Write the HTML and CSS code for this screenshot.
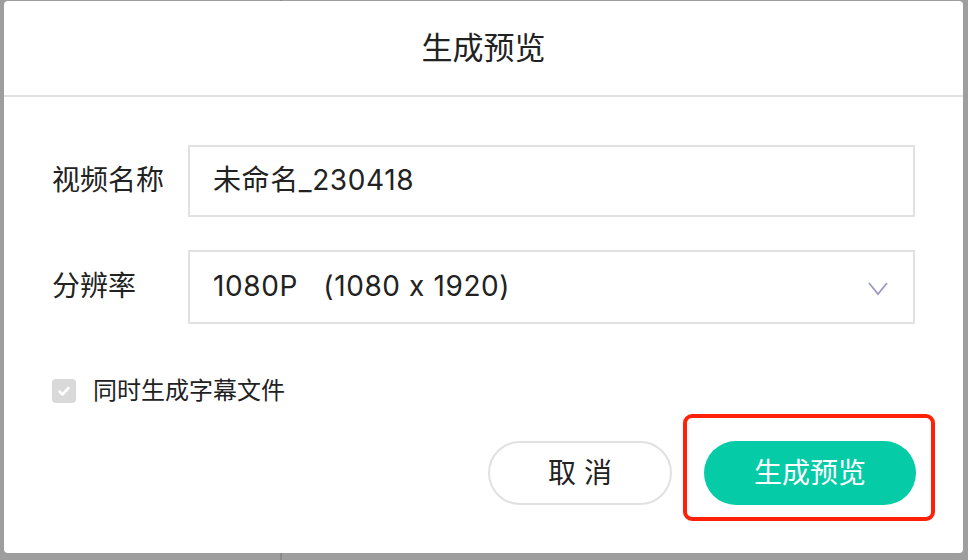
FILE: index.html
```html
<!DOCTYPE html>
<html lang="zh-CN">
<head>
<meta charset="utf-8">
<title>生成预览</title>
<link rel="stylesheet" href="styles.css">
</head>
<body>
<div class="dialog">
  <div class="header">生成预览</div>
  <div class="content">
    <div class="row">
      <div class="label">视频名称</div>
      <div class="field">未命名_230418</div>
    </div>
    <div class="row row-gap">
      <div class="label">分辨率</div>
      <div class="field field-tall select">
        <span>1080P&nbsp;&nbsp;&nbsp;(1080 x 1920)</span>
        <svg class="chevron" width="22" height="16" viewBox="0 0 22 16"><path d="M2 2 L11 13 L20 2" fill="none" stroke="#9a9bc0" stroke-width="1.8"/></svg>
      </div>
    </div>
    <div class="check-row">
      <span class="checkbox"><svg width="24" height="24" viewBox="0 0 24 24"><path d="M7.5 12.5 L10.5 15.5 L16.5 9" fill="none" stroke="#fff" stroke-width="2.6" stroke-linecap="round" stroke-linejoin="round"/></svg></span>
      <span class="check-label">同时生成字幕文件</span>
    </div>
    <div class="footer">
      <button class="btn btn-cancel">取 消</button>
      <button class="btn btn-primary">生成预览</button>
    </div>
  </div>
  <div class="highlight"></div>
</div>
</body>
</html>
```
FILE: styles.css
```css
html, body {
  margin: 0;
  padding: 0;
}
body {
  width: 968px;
  height: 560px;
  overflow: hidden;
  background: linear-gradient(to right, #9e9e9e 0, #9e9e9e 280px, #8a8a8a 280px, #8a8a8a 282px, #9e9e9e 282px);
  font-family: "Inter", "Noto Sans CJK SC", "Noto Sans", sans-serif;
  font-feature-settings: "calt" 0;
  color: #222;
  line-height: 1.2;
}
.dialog {
  position: relative;
  margin: 1px 0 0 4px;
  width: 959px;
  height: 552px;
  background: #fff;
  border-radius: 4px;
  display: flex;
  flex-direction: column;
}
.header {
  flex: 0 0 auto;
  height: 94px;
  border-bottom: 2px solid #e2e2e2;
  display: flex;
  align-items: center;
  justify-content: center;
  font-size: 31px;
  color: #222;
}
.content {
  flex: 0 0 auto;
  padding: 48px 48px 0 48px;
  display: flex;
  flex-direction: column;
}
.row {
  flex: 0 0 auto;
  display: flex;
  align-items: center;
}
.row-gap {
  margin-top: 33px;
}
.label {
  width: 136px;
  font-size: 28px;
  color: #222;
}
.field {
  flex: 1;
  height: 72px;
  box-sizing: border-box;
  border: 2px solid #e1e1e1;
  padding: 0 24px 0 23px;
  display: flex;
  align-items: center;
  font-size: 28px;
  letter-spacing: 0.6px;
  color: #222;
}
.field-tall {
  height: 74px;
}
.select {
  justify-content: space-between;
}
.chevron {
  display: block;
  margin-top: 4px;
}
.check-row {
  flex: 0 0 auto;
  margin-top: 55px;
  height: 24px;
  display: flex;
  align-items: center;
}
.checkbox {
  width: 24px;
  height: 24px;
  border-radius: 4px;
  background: #d9d9d9;
  display: flex;
}
.check-label {
  margin-left: 17px;
  font-size: 24px;
  color: #222;
}
.footer {
  flex: 0 0 auto;
  margin-top: 38px;
  margin-right: -1px;
  display: flex;
  justify-content: flex-end;
  gap: 32px;
}
.btn {
  height: 64px;
  border-radius: 32px;
  font-family: inherit;
  font-size: 28px;
  line-height: 1;
  padding: 0;
  cursor: pointer;
}
.btn-cancel {
  width: 184px;
  background: #fff;
  border: 2px solid #e1e1e1;
  color: #222;
}
.btn-primary {
  width: 212px;
  background: #05cca6;
  border: none;
  color: #fff;
}
.highlight {
  position: absolute;
  left: 679px;
  top: 413px;
  width: 252px;
  height: 107px;
  box-sizing: border-box;
  border: 4px solid #ff2208;
  border-radius: 9px;
}
```
